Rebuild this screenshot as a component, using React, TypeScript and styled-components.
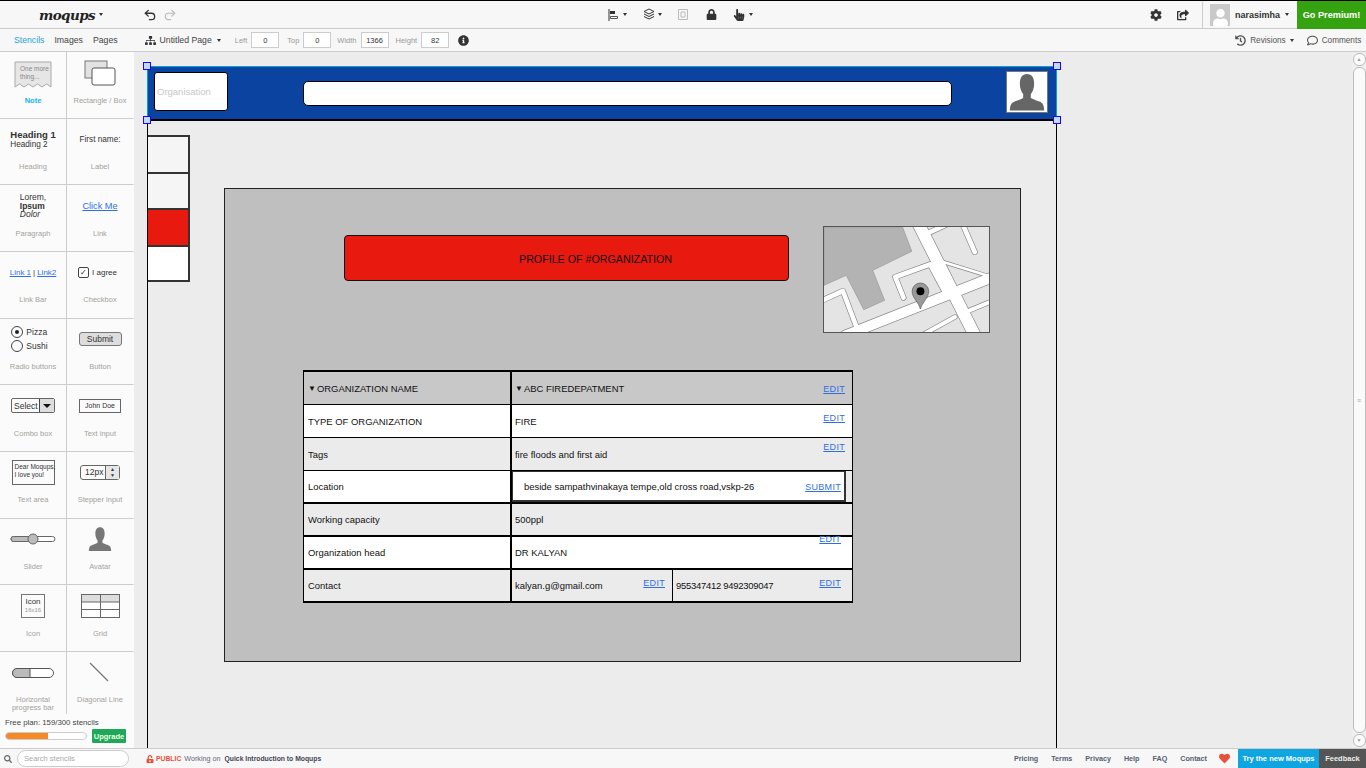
import React from "react";
import styled, { createGlobalStyle } from "styled-components";
import { Undo2, Redo2 } from "lucide-react";
import {
  FaCog,
  FaShareSquare,
  FaLock,
  FaHandPointer,
  FaSitemap,
  FaInfoCircle,
  FaHistory,
  FaRegComment,
  FaHeart,
  FaSearch,
  FaUnlockAlt,
  FaUser,
} from "react-icons/fa";

const Global = createGlobalStyle`
  html, body { margin: 0; padding: 0; background: #fff; }
  * { box-sizing: border-box; }
  body { font-family: "Liberation Sans", Arial, sans-serif; color: #222; }
`;

const Root = styled.div`
  width: 1366px;
  height: 768px;
  overflow: hidden;
  display: flex;
  flex-direction: column;
`;

/* top bars */
const TopBar = styled.div`
  height: 29px;
  flex: none;
  display: flex;
  align-items: center;
  background: #f7f7f7;
  border-top: 1px solid #000;
  border-bottom: 1px solid #ccc;
`;
const Logo = styled.span`
  margin-left: 39px;
  width: 54px;
  font: italic bold 13.5px "DejaVu Serif", serif;
  letter-spacing: -0.6px;
  color: #222;
  white-space: nowrap;
`;
const Caret = styled.span<{ $ml?: number; $color?: string; $size?: number }>`
  width: 0;
  height: 0;
  flex: none;
  margin-left: ${(p) => p.$ml ?? 4}px;
  border-left: ${(p) => p.$size ?? 2.5}px solid transparent;
  border-right: ${(p) => p.$size ?? 2.5}px solid transparent;
  border-top: ${(p) => (p.$size ?? 2.5) + 0.5}px solid ${(p) => p.$color ?? "#333"};
`;
const ToolGroup = styled.div<{ $ml: number; $gap?: number }>`
  display: flex;
  align-items: center;
  margin-left: ${(p) => p.$ml}px;
  gap: ${(p) => p.$gap ?? 0}px;
  color: #333;
`;
const Tool = styled.span<{ $ml?: number }>`
  display: flex;
  align-items: center;
  margin-left: ${(p) => p.$ml ?? 0}px;
`;
const UserBox = styled.div`
  margin-left: 13px;
  height: 28px;
  width: 95px;
  flex: none;
  display: flex;
  align-items: center;
  padding-left: 7px;
  border-left: 1px solid #ccc;
`;
const UserPic = styled.div`
  width: 20px;
  height: 22px;
  background: #c9c9c9;
  display: flex;
  align-items: flex-end;
  justify-content: center;
  overflow: hidden;
  color: #fff;
`;
const UserName = styled.span`
  margin-left: 5px;
  font-size: 9px;
  font-weight: bold;
  color: #333;
`;
const Premium = styled.div`
  width: 69px;
  height: 28px;
  flex: none;
  background: #35a30f;
  color: #fff;
  font-size: 9.2px;
  font-weight: bold;
  display: flex;
  align-items: center;
  justify-content: center;
`;

const SubBar = styled.div`
  height: 23px;
  flex: none;
  display: flex;
  align-items: center;
  background: #f7f7f7;
  border-bottom: 1px solid #ccc;
  font-size: 8.7px;
  color: #333;
  white-space: nowrap;
`;
const SideTab = styled.span<{ $active?: boolean; $ml: number }>`
  margin-left: ${(p) => p.$ml}px;
  color: ${(p) => (p.$active ? "#23a5d8" : "#444")};
`;
const FieldLabel = styled.span<{ $ml: number }>`
  margin-left: ${(p) => p.$ml}px;
  margin-right: 4px;
  font-size: 7.5px;
  color: #999;
`;
const FieldBox = styled.span`
  width: 28px;
  height: 16px;
  background: #fff;
  border: 1px solid #ccc;
  font-size: 7.5px;
  color: #333;
  display: flex;
  align-items: center;
  justify-content: center;
`;
const SmallAction = styled.span<{ $ml: number }>`
  margin-left: ${(p) => p.$ml}px;
  display: flex;
  align-items: center;
  gap: 4px;
  font-size: 8.2px;
  color: #555;
`;

/* middle */
const Main = styled.div`
  flex: 1;
  min-height: 0;
  display: flex;
`;
const Sidebar = styled.div`
  width: 134px;
  flex: none;
  display: flex;
  flex-direction: column;
  background: #fbfbfb;
`;
const StencilGrid = styled.div`
  height: 662px;
  flex: none;
  overflow: hidden;
  display: grid;
  grid-template-columns: 67px 67px;
  grid-auto-rows: 66.67px;
`;
const Cell = styled.div<{ $right?: boolean }>`
  display: flex;
  flex-direction: column;
  align-items: center;
  border-bottom: 1px solid #ccc;
  border-right: 1px solid ${(p) => (p.$right ? "transparent" : "#ccc")};
`;
const Preview = styled.div`
  height: 41px;
  width: 100%;
  flex: none;
  display: flex;
  flex-direction: column;
  align-items: center;
  justify-content: center;
  color: #333;
  font-size: 8px;
`;
const CellLabel = styled.div<{ $active?: boolean }>`
  margin-top: 3.5px;
  max-width: 56px;
  font-size: 7.5px;
  line-height: 7.5px;
  text-align: center;
  font-weight: ${(p) => (p.$active ? "bold" : "normal")};
  color: ${(p) => (p.$active ? "#14b3ec" : "#a5a29c")};
`;
const TextStack = styled.div<{ $shift?: number }>`
  display: flex;
  flex-direction: column;
  align-items: flex-start;
  gap: 0;
  margin-right: ${(p) => p.$shift ?? 0}px;
`;
const RadioStack = styled(TextStack)`
  gap: 2px;
  font-size: 8.5px;
`;
const HeadOne = styled.div`
  font-size: 9.5px;
  font-weight: bold;
  line-height: 10px;
`;
const HeadTwo = styled.div`
  font-size: 8.2px;
  line-height: 9px;
`;
const ParaText = styled.div<{ $bold?: boolean; $italic?: boolean }>`
  font-size: 8.5px;
  line-height: 8.5px;
  font-weight: ${(p) => (p.$bold ? "bold" : "normal")};
  font-style: ${(p) => (p.$italic ? "italic" : "normal")};
`;
const BlueLink = styled.span<{ $size?: number }>`
  color: #2f6fe6;
  text-decoration: underline;
  font-size: ${(p) => p.$size ?? 8}px;
`;
const InlineRow = styled.div<{ $gap?: number; $shift?: number }>`
  display: flex;
  align-items: center;
  gap: ${(p) => p.$gap ?? 3}px;
  margin-right: ${(p) => p.$shift ?? 0}px;
`;
const CheckBox = styled.span`
  width: 11px;
  height: 11px;
  border: 1px solid #444;
  border-radius: 2px;
  font-size: 8px;
  line-height: 9px;
  text-align: center;
`;
const Radio = styled.span<{ $on?: boolean }>`
  width: 12px;
  height: 12px;
  border: 1px solid #444;
  border-radius: 50%;
  display: flex;
  align-items: center;
  justify-content: center;
  &::after {
    content: "";
    width: 4px;
    height: 4px;
    border-radius: 50%;
    background: ${(p) => (p.$on ? "#222" : "transparent")};
  }
`;
const SubmitBtn = styled.div`
  width: 43px;
  height: 14px;
  border: 1px solid #777;
  border-radius: 3px;
  background: #ddd;
  font-size: 8.5px;
  display: flex;
  align-items: center;
  justify-content: center;
`;
const Combo = styled.div`
  width: 44px;
  height: 15px;
  border: 1px solid #666;
  border-radius: 2px;
  display: flex;
  align-items: center;
  font-size: 8.5px;
  padding-left: 2px;
  justify-content: space-between;
`;
const ComboArrow = styled.div`
  width: 15px;
  height: 13px;
  border-left: 1px solid #444;
  background: #ddd;
  display: flex;
  align-items: center;
  justify-content: center;
`;
const TextField = styled.div`
  width: 42px;
  height: 14px;
  border: 1px solid #666;
  font-size: 7px;
  display: flex;
  align-items: center;
  justify-content: center;
`;
const TextAreaBox = styled.div`
  width: 43px;
  height: 25px;
  border: 1px solid #666;
  font-size: 6.5px;
  line-height: 8px;
  padding: 2px 2px;
  white-space: nowrap;
`;
const Stepper = styled.div`
  width: 40px;
  height: 15px;
  border: 1px solid #666;
  border-radius: 3px;
  font-size: 8.5px;
  display: flex;
  align-items: center;
  justify-content: space-between;
  padding-left: 4px;
`;
const StepperArrows = styled.div`
  width: 14px;
  height: 13px;
  border-left: 1px solid #666;
  background: #e6e6e6;
  font-size: 5px;
  line-height: 6px;
  text-align: center;
`;
const IconStencil = styled.div`
  width: 24px;
  height: 24px;
  border: 1px solid #777;
  text-align: center;
  font-size: 8px;
  line-height: 9px;
  padding-top: 2px;
  small {
    display: block;
    font-size: 6px;
    color: #999;
  }
`;

const PlanBox = styled.div`
  height: 34px;
  padding: 4px 5px 0;
  font-size: 7.8px;
  color: #444;
`;
const PlanRow = styled.div`
  display: flex;
  align-items: center;
  justify-content: space-between;
  margin-top: 2px;
  padding-right: 3px;
`;
const PlanTrack = styled.div`
  width: 82px;
  height: 8px;
  border: 1px solid #ccc;
  border-radius: 4px;
  background: #fff;
  overflow: hidden;
`;
const PlanFill = styled.div`
  height: 100%;
  background: #f58a24;
`;
const Upgrade = styled.div`
  width: 34px;
  height: 14px;
  background: #1fa85a;
  border-radius: 1px;
  color: #e8ffe0;
  font-size: 7.5px;
  font-weight: bold;
  display: flex;
  align-items: center;
  justify-content: center;
`;

/* canvas */
const Canvas = styled.div`
  flex: 1;
  min-width: 0;
  display: flex;
  justify-content: space-between;
  background: #ececec;
  padding-left: 13px;
  overflow: hidden;
`;
const Artboard = styled.div`
  width: 910px;
  flex: none;
  margin-top: 14px;
  display: flex;
  flex-direction: column;
`;
const Header = styled.div`
  position: relative;
  height: 55px;
  flex: none;
  background: #0a44a0;
  border: 1px solid #00a3d9;
  border-bottom: 2px solid #000;
  display: flex;
  align-items: center;
  padding-left: 6px;
`;
const Handle = styled.span<{ $x: "left" | "right"; $y: "top" | "bottom" }>`
  position: absolute;
  ${(p) => p.$x}: -5px;
  ${(p) => p.$y}: -5px;
  width: 8px;
  height: 8px;
  background: #bcdcff;
  border: 1px solid #2a00e8;
`;
const OrgBox = styled.div`
  width: 74px;
  height: 39px;
  flex: none;
  margin-top: -3px;
  background: #fff;
  border: 1px solid #000;
  border-radius: 3px;
  color: #c8c8c8;
  font-size: 9.5px;
  display: flex;
  align-items: center;
  padding-left: 2px;
`;
const SearchBox = styled.div`
  width: 649px;
  height: 25px;
  flex: none;
  margin: 1px 0 0 75px;
  background: #fff;
  border: 1px solid #000;
  border-radius: 5px;
`;
const AvatarBox = styled.div`
  width: 42px;
  height: 42px;
  flex: none;
  margin: -2px 0 0 54px;
  background: #fff;
  border: 1px solid #777;
`;
const Body = styled.div`
  flex: 1;
  min-height: 0;
  display: flex;
  align-items: flex-start;
  padding-top: 14px;
  border-left: 1px solid #000;
  border-right: 1px solid #000;
`;
const NavStack = styled.div`
  width: 42px;
  flex: none;
  display: flex;
  flex-direction: column;
`;
const NavSquare = styled.div<{ $bg: string }>`
  height: 36.67px;
  background: ${(p) => p.$bg};
  border-top: 2px solid #333;
  border-right: 2px solid #333;
  &:last-child {
    border-bottom: 2px solid #333;
  }
`;
const Panel = styled.div`
  width: 797px;
  height: 474px;
  flex: none;
  margin: 53px 0 0 34px;
  background: #bfbfbf;
  border: 1px solid #222;
  padding: 37px 0 0 78px;
`;
const PanelTop = styled.div`
  display: flex;
  align-items: flex-start;
  height: 144px;
`;
const Banner = styled.div`
  width: 445px;
  height: 46px;
  flex: none;
  margin: 9px 34px 0 41px;
  background: #e8190f;
  border: 1px solid #111;
  border-radius: 4px;
  font-size: 10.7px;
  color: #111;
  display: flex;
  align-items: center;
  padding: 1px 0 0 174px;
  white-space: nowrap;
`;
const MapFrame = styled.svg`
  display: block;
  width: 167px;
  height: 107px;
  flex: none;
  border: 1px solid #555;
`;
const Table = styled.div`
  width: 550px;
  border-top: 2px solid #000;
  border-left: 1px solid #000;
  border-right: 1px solid #000;
  font-size: 9.45px;
  color: #111;
`;
const Row = styled.div<{ $bg: string; $thick?: boolean }>`
  height: 33px;
  display: grid;
  grid-template-columns: 208px 1fr;
  background: ${(p) => p.$bg};
  border-bottom: ${(p) => (p.$thick ? 2 : 1)}px solid #000;
`;
const TCell = styled.div`
  position: relative;
  display: flex;
  align-items: center;
  padding-left: 4px;
  border-right: 2px solid #000;
  white-space: nowrap;
  &:last-child {
    border-right: 0;
    padding-left: 3px;
  }
`;
const SplitCell = styled.div`
  display: grid;
  grid-template-columns: 160px 1fr;
`;
const HalfCell = styled.div`
  position: relative;
  display: flex;
  align-items: center;
  padding-left: 3px;
  white-space: nowrap;
  & + & {
    border-left: 1px solid #000;
  }
`;
const PhoneText = styled.span`
  letter-spacing: -0.25px;
`;
const Edit = styled.a<{ $top: number; $right: number }>`
  position: absolute;
  top: ${(p) => p.$top}px;
  right: ${(p) => p.$right}px;
  color: #2f6fe6;
  text-decoration: underline;
  font-size: 9px;
  letter-spacing: 0.3px;
`;
const LocationCell = styled.div`
  display: flex;
  background: #ebebeb;
`;
const LocationBox = styled.div`
  position: relative;
  width: 334px;
  background: #fff;
  border: 2px solid #333;
  border-top-width: 1px;
  border-left-width: 1px;
  display: flex;
  align-items: center;
  padding-left: 11px;
  white-space: nowrap;
`;
const Marker = styled.span`
  font-size: 8px;
  margin-right: 1px;
`;

const Scrollbar = styled.div`
  width: 14px;
  flex: none;
  display: flex;
  flex-direction: column;
  align-items: center;
  background: #efefef;
  padding: 1px 0;
  gap: 1px;
`;
const ScrollArrow = styled.div`
  width: 13px;
  height: 13px;
  flex: none;
  background: #fafafa;
  border: 1px solid #bbb;
  border-radius: 6px;
  font-size: 5px;
  line-height: 11px;
  text-align: center;
  color: #999;
`;
const ScrollThumb = styled.div`
  flex: 1;
  width: 13px;
  background: #fafafa;
  border: 1px solid #bbb;
  border-radius: 6px;
  display: flex;
  align-items: center;
  justify-content: center;
  font-size: 7px;
  color: #aaa;
`;

/* footer */
const Footer = styled.div`
  height: 20px;
  flex: none;
  display: flex;
  align-items: center;
  background: #f7f7f7;
  border-top: 1px solid #ccc;
  font-size: 7.5px;
`;
const SearchIcon = styled.span`
  margin-left: 4px;
  display: flex;
  color: #666;
`;
const SearchInput = styled.div`
  width: 112px;
  height: 17px;
  margin-left: 5px;
  flex: none;
  background: #fff;
  border: 1px solid #ccc;
  border-radius: 9px;
  color: #aaa;
  display: flex;
  align-items: center;
  padding-left: 6px;
`;
const PublicTag = styled.span`
  margin-left: 17px;
  display: flex;
  align-items: center;
  gap: 2px;
  color: #e8503a;
  font-size: 6.8px;
  font-weight: bold;
`;
const WorkingOn = styled.span`
  margin-left: 3px;
  color: #667;
  font-size: 7.2px;
`;
const DocName = styled.span`
  margin-left: 4px;
  color: #445;
  font-size: 6.8px;
  font-weight: bold;
`;
const FooterLinks = styled.div`
  margin-left: auto;
  display: flex;
  align-items: center;
  gap: 13px;
  font-size: 7.2px;
  font-weight: bold;
  color: #555f70;
`;
const HeartMark = styled.span`
  display: flex;
  margin: 0 8px 0 12px;
  color: #e8503a;
`;
const TryBtn = styled.div`
  width: 81px;
  height: 19px;
  background: #0ea5e0;
  color: #fff;
  font-weight: bold;
  display: flex;
  align-items: center;
  justify-content: center;
`;
const FeedbackBtn = styled.div`
  width: 47px;
  height: 19px;
  background: #555;
  color: #eee;
  font-weight: bold;
  display: flex;
  align-items: center;
  justify-content: center;
`;

const AlignIcon = () => (
  <svg width="11" height="12" viewBox="0 0 11 12">
    <path d="M1 0v12" stroke="#333" />
    <path d="M2 2h5v3H2z" fill="#333" />
    <path d="M2.500 7.500h7v2h-7z" fill="none" stroke="#555" />
  </svg>
);
const LayersIcon = () => (
  <svg width="12" height="13" viewBox="0 0 12 13" fill="none" stroke="#333">
    <path d="M6 1l5 2.500L6 6 1 3.500z" />
    <path d="M1 6l5 2.500L11 6" />
    <path d="M1 8.500L6 11l5-2.500" />
  </svg>
);
const FrameIcon = () => (
  <svg width="12" height="13" viewBox="0 0 12 13" fill="none" stroke="#bbb">
    <path d="M1.500 1.500h9v10h-9z" />
    <path d="M4 4h4v5H4z" />
  </svg>
);
const Silhouette = ({ size, color }: { size: number; color: string }) => (
  <svg width={size} height={size} viewBox="0 0 42 42" style={{ display: "block" }}>
    <path
      fill={color}
      d="M21 2c5 0 7.500 4 7.500 10 0 5-1.500 9-3.500 11v4c2 2 8 3 11 5 2 1.500 3 4 3 8.500H3c0-4.500 1-7 3-8.500 3-2 9-3 11-5v-4c-2-2-3.500-6-3.500-11C13.500 6 16 2 21 2z"
    />
  </svg>
);

const mapRoads: { d: string; w: number }[] = [
  { d: "M265 232L240 170 345 132 388 212", w: 14 },
  { d: "M20 240L82 212 125 325", w: 14 },
  { d: "M445 15L480 95", w: 14 },
  { d: "M335 40L400 10", w: 14 },
  { d: "M385 125L515 165", w: 8 },
  { d: "M465 270L530 243", w: 12 },
  { d: "M320 345L420 290", w: 12 },
  { d: "M90 345L530 172", w: 30 },
  { d: "M310 10L480 345", w: 36 },
];

const MapPicture = () => (
  <MapFrame viewBox="25 20 498 315" preserveAspectRatio="none">
    <rect x="25" y="20" width="498" height="315" fill="#e4e4e4" />
    <path
      d="M25 20H262L290 93 172 150 208 240 145 268 92 165 25 195z"
      fill="#b3b3b3"
      stroke="#999"
      strokeWidth="2"
    />
    <g fill="none" strokeLinecap="round" strokeLinejoin="round" stroke="#888">
      {mapRoads.map((r) => (
        <path key={r.d} d={r.d} strokeWidth={r.w + 4} />
      ))}
    </g>
    <g fill="none" strokeLinecap="round" strokeLinejoin="round" stroke="#fff">
      {mapRoads.map((r) => (
        <path key={r.d} d={r.d} strokeWidth={r.w} />
      ))}
    </g>
    <path
      d="M316 266C310 245 291 232 291 213a25 25 0 0 1 50 0C341 232 322 245 316 266z"
      fill="#999"
      stroke="#555"
      strokeWidth="2"
    />
    <circle cx="316" cy="213" r="12" fill="#000" />
  </MapFrame>
);

type Stencil = { label: string; active?: boolean; preview: React.ReactNode };

const stencils: Stencil[] = [
  {
    label: "Note",
    active: true,
    preview: (
      <svg width="38" height="35" viewBox="0 -6 38 35">
        <path
          d="M1 1h36v25l-4.500-3-4.500 3-4.500-3-4.500 3-4.500-3-4.500 3-4.500-3L1 26z"
          fill="#e6e6e6"
          stroke="#aaa"
        />
        <text x="6" y="10" fontSize="6.500" fill="#888" fontFamily="Liberation Sans">One more</text>
        <text x="6" y="18" fontSize="6.500" fill="#888" fontFamily="Liberation Sans">thing...</text>
      </svg>
    ),
  },
  {
    label: "Rectangle / Box",
    preview: (
      <svg width="32" height="26" viewBox="0 0 32 26">
        <rect x="1" y="1" width="22" height="17" fill="#e2e2e2" stroke="#777" />
        <rect x="8" y="8" width="23" height="17" rx="2" fill="#fff" stroke="#555" />
      </svg>
    ),
  },
  {
    label: "Heading",
    preview: (
      <TextStack>
        <HeadOne>Heading 1</HeadOne>
        <HeadTwo>Heading 2</HeadTwo>
      </TextStack>
    ),
  },
  { label: "Label", preview: <HeadTwo>First name:</HeadTwo> },
  {
    label: "Paragraph",
    preview: (
      <TextStack>
        <ParaText>Lorem,</ParaText>
        <ParaText $bold>Ipsum</ParaText>
        <ParaText $italic>Dolor</ParaText>
      </TextStack>
    ),
  },
  { label: "Link", preview: <BlueLink $size={9.2}>Click Me</BlueLink> },
  {
    label: "Link Bar",
    preview: (
      <InlineRow $gap={2}>
        <BlueLink>Link 1</BlueLink>|<BlueLink>Link2</BlueLink>
      </InlineRow>
    ),
  },
  {
    label: "Checkbox",
    preview: (
      <InlineRow $shift={5}>
        <CheckBox>✓</CheckBox>I agree
      </InlineRow>
    ),
  },
  {
    label: "Radio buttons",
    preview: (
      <RadioStack $shift={7}>
        <InlineRow>
          <Radio $on />
          Pizza
        </InlineRow>
        <InlineRow>
          <Radio />
          Sushi
        </InlineRow>
      </RadioStack>
    ),
  },
  { label: "Button", preview: <SubmitBtn>Submit</SubmitBtn> },
  {
    label: "Combo box",
    preview: (
      <Combo>
        Select
        <ComboArrow>
          <Caret $ml={0} $color="#111" $size={4} />
        </ComboArrow>
      </Combo>
    ),
  },
  { label: "Text input", preview: <TextField>John Doe</TextField> },
  {
    label: "Text area",
    preview: (
      <TextAreaBox>
        Dear Moqups,
        <br />I love you!
      </TextAreaBox>
    ),
  },
  {
    label: "Stepper input",
    preview: (
      <Stepper>
        12px
        <StepperArrows>
          ▲
          <br />▼
        </StepperArrows>
      </Stepper>
    ),
  },
  {
    label: "Slider",
    preview: (
      <svg width="46" height="12" viewBox="0 0 46 12">
        <rect x="1" y="3.500" width="44" height="5" rx="2.500" fill="#fff" stroke="#666" />
        <rect x="1" y="3.500" width="22" height="5" rx="2.500" fill="#bbb" stroke="#666" />
        <circle cx="23" cy="6" r="5" fill="#bbb" stroke="#666" />
      </svg>
    ),
  },
  { label: "Avatar", preview: <Silhouette size={26} color="#777" /> },
  {
    label: "Icon",
    preview: (
      <IconStencil>
        Icon
        <small>16x16</small>
      </IconStencil>
    ),
  },
  {
    label: "Grid",
    preview: (
      <svg width="39" height="24" viewBox="0 0 39 24">
        <rect x="0.500" y="0.500" width="38" height="23" fill="#fff" stroke="#666" />
        <rect x="0.500" y="0.500" width="38" height="7.500" fill="#ddd" stroke="#666" />
        <path d="M0 15.500h39M19.500 0v24" stroke="#666" />
      </svg>
    ),
  },
  {
    label: "Horizontal progress bar",
    preview: (
      <svg width="42" height="12" viewBox="0 -2 42 12">
        <rect x="0.500" y="0.500" width="41" height="9" rx="4.500" fill="#fff" stroke="#555" />
        <path d="M5 .5h13v9H5a4.500 4.500 0 0 1 0-9z" fill="#bbb" stroke="#555" />
      </svg>
    ),
  },
  {
    label: "Diagonal Line",
    preview: (
      <svg width="20" height="20" viewBox="0 0 20 20" style={{ marginRight: 3 }}>
        <path d="M1 1l18 18" stroke="#777" strokeWidth="1.200" />
      </svg>
    ),
  },
];

const rows = [
  { bg: "#ffffff", left: "TYPE OF ORGANIZATION", right: "FIRE", edit: 8 },
  { bg: "#ebebeb", left: "Tags", right: "fire floods and first aid", edit: 4 },
];

export default function App() {
  return (
    <Root>
      <Global />
      <TopBar>
        <Logo>moqups</Logo>
        <Caret $ml={6} />
        <ToolGroup $ml={40} $gap={6}>
          <Tool>
            <Undo2 size={14} strokeWidth={2.2} />
          </Tool>
          <Tool>
            <Redo2 size={14} strokeWidth={2} color="#bbb" />
          </Tool>
        </ToolGroup>
        <ToolGroup $ml={431}>
          <Tool>
            <AlignIcon />
          </Tool>
          <Caret $ml={4} />
          <Tool $ml={16}>
            <LayersIcon />
          </Tool>
          <Caret $ml={3} />
          <Tool $ml={15}>
            <FrameIcon />
          </Tool>
          <Tool $ml={17}>
            <FaLock size={11} />
          </Tool>
          <Tool $ml={16}>
            <FaHandPointer size={12} />
          </Tool>
          <Caret $ml={4} />
        </ToolGroup>
        <ToolGroup $ml={397} $gap={15}>
          <Tool>
            <FaCog size={12} />
          </Tool>
          <Tool>
            <FaShareSquare size={12} />
          </Tool>
        </ToolGroup>
        <UserBox>
          <UserPic>
            <FaUser size={17} />
          </UserPic>
          <UserName>narasimha</UserName>
          <Caret $ml={5} />
        </UserBox>
        <Premium>Go Premium!</Premium>
      </TopBar>
      <SubBar>
        <SideTab $ml={14} $active>
          Stencils
        </SideTab>
        <SideTab $ml={10}>Images</SideTab>
        <SideTab $ml={10}>Pages</SideTab>
        <Tool $ml={27}>
          <FaSitemap size={11} />
        </Tool>
        <SideTab $ml={4}>Untitled Page</SideTab>
        <Caret $ml={5} />
        <FieldLabel $ml={14}>Left</FieldLabel>
        <FieldBox>0</FieldBox>
        <FieldLabel $ml={8}>Top</FieldLabel>
        <FieldBox>0</FieldBox>
        <FieldLabel $ml={6}>Width</FieldLabel>
        <FieldBox>1366</FieldBox>
        <FieldLabel $ml={7}>Height</FieldLabel>
        <FieldBox>82</FieldBox>
        <Tool $ml={9}>
          <FaInfoCircle size={11} />
        </Tool>
        <SmallAction $ml={766}>
          <FaHistory size={11} />
          Revisions
          <Caret $ml={0} />
        </SmallAction>
        <SmallAction $ml={13}>
          <FaRegComment size={11} />
          Comments
        </SmallAction>
      </SubBar>
      <Main>
        <Sidebar>
          <StencilGrid>
            {stencils.map((s, i) => (
              <Cell key={s.label} $right={i % 2 === 1}>
                <Preview>{s.preview}</Preview>
                <CellLabel $active={s.active}>{s.label}</CellLabel>
              </Cell>
            ))}
          </StencilGrid>
          <PlanBox>
            Free plan: 159/300 stencils
            <PlanRow>
              <PlanTrack>
                <PlanFill style={{ width: `${(159 / 300) * 100}%` }} />
              </PlanTrack>
              <Upgrade>Upgrade</Upgrade>
            </PlanRow>
          </PlanBox>
        </Sidebar>
        <Canvas>
          <Artboard>
            <Header>
              <OrgBox>Organisation</OrgBox>
              <SearchBox />
              <AvatarBox>
                <Silhouette size={40} color="#666" />
              </AvatarBox>
              <Handle $x="left" $y="top" />
              <Handle $x="right" $y="top" />
              <Handle $x="left" $y="bottom" />
              <Handle $x="right" $y="bottom" />
            </Header>
            <Body>
              <NavStack>
                <NavSquare $bg="#f5f5f5" />
                <NavSquare $bg="#f5f5f5" />
                <NavSquare $bg="#e8190f" />
                <NavSquare $bg="#ffffff" />
              </NavStack>
              <Panel>
                <PanelTop>
                  <Banner>PROFILE OF #ORGANIZATION</Banner>
                  <MapPicture />
                </PanelTop>
                <Table>
                  <Row $bg="#c8c8c8">
                    <TCell>
                      <Marker>▼</Marker>ORGANIZATION NAME
                    </TCell>
                    <TCell>
                      <Marker>▼</Marker>ABC FIREDEPATMENT
                      <Edit $top={12} $right={7}>EDIT</Edit>
                    </TCell>
                  </Row>
                  {rows.map((r) => (
                    <Row key={r.left} $bg={r.bg}>
                      <TCell>{r.left}</TCell>
                      <TCell>
                        {r.right}
                        <Edit $top={r.edit} $right={7}>EDIT</Edit>
                      </TCell>
                    </Row>
                  ))}
                  <Row $bg="#ffffff" $thick>
                    <TCell>Location</TCell>
                    <LocationCell>
                      <LocationBox>
                        beside sampathvinakaya tempe,old cross road,vskp-26
                        <Edit $top={10} $right={3}>SUBMIT</Edit>
                      </LocationBox>
                    </LocationCell>
                  </Row>
                  <Row $bg="#ebebeb" $thick>
                    <TCell>Working capacity</TCell>
                    <TCell>500ppl</TCell>
                  </Row>
                  <Row $bg="#ffffff" $thick>
                    <TCell>Organization head</TCell>
                    <TCell>
                      DR KALYAN
                      <Edit $top={-3} $right={11}>EDIT</Edit>
                    </TCell>
                  </Row>
                  <Row $bg="#ebebeb" $thick>
                    <TCell>Contact</TCell>
                    <SplitCell>
                      <HalfCell>
                        kalyan.g@gmail.com
                        <Edit $top={8} $right={7}>EDIT</Edit>
                      </HalfCell>
                      <HalfCell>
                        <PhoneText>955347412 9492309047</PhoneText>
                        <Edit $top={8} $right={11}>EDIT</Edit>
                      </HalfCell>
                    </SplitCell>
                  </Row>
                </Table>
              </Panel>
            </Body>
          </Artboard>
          <Scrollbar>
            <ScrollArrow>▲</ScrollArrow>
            <ScrollThumb>≡</ScrollThumb>
            <ScrollArrow>▼</ScrollArrow>
          </Scrollbar>
        </Canvas>
      </Main>
      <Footer>
        <SearchIcon>
          <FaSearch size={8} />
        </SearchIcon>
        <SearchInput>Search stencils</SearchInput>
        <PublicTag>
          <FaUnlockAlt size={8} />
          PUBLIC
        </PublicTag>
        <WorkingOn>Working on</WorkingOn>
        <DocName>Quick Introduction to Moqups</DocName>
        <FooterLinks>
          <span>Pricing</span>
          <span>Terms</span>
          <span>Privacy</span>
          <span>Help</span>
          <span>FAQ</span>
          <span>Contact</span>
        </FooterLinks>
        <HeartMark>
          <FaHeart size={11} />
        </HeartMark>
        <TryBtn>Try the new Moqups</TryBtn>
        <FeedbackBtn>Feedback</FeedbackBtn>
      </Footer>
    </Root>
  );
}
